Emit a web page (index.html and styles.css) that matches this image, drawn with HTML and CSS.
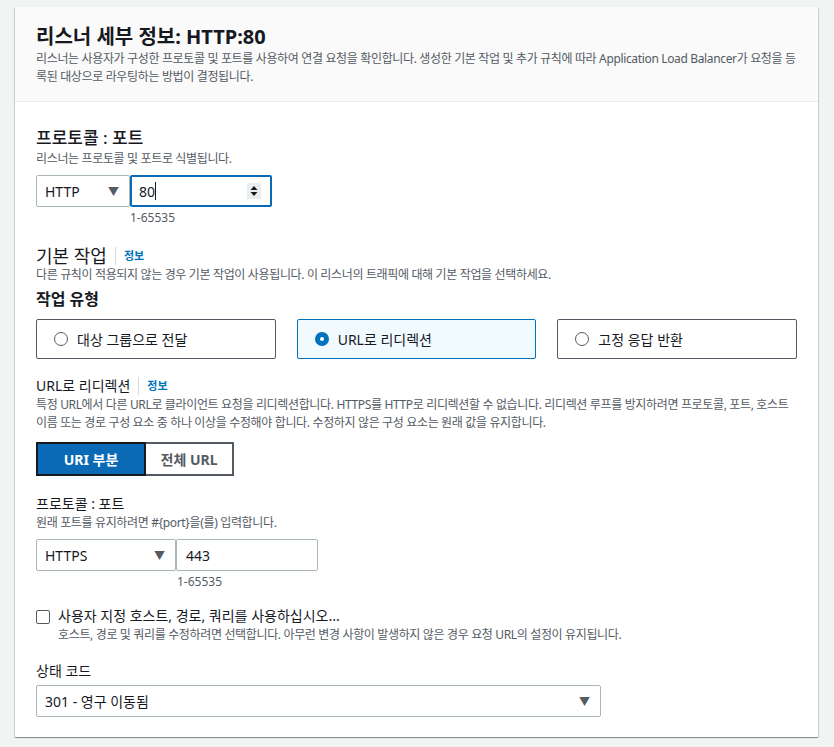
FILE: index.html
```html
<!DOCTYPE html>
<html lang="ko">
<head>
    <meta charset="UTF-8">
    <title>리스너 세부 정보</title>
    <link rel="stylesheet" href="styles.css">
</head>
<body>

<div class="card">
    <!-- Header -->
    <div class="card-header">
        <h2>리스너 세부 정보: HTTP:80</h2>
        <p class="desc">리스너는 사용자가 구성한 프로토콜 및 포트를 사용하여 연결 요청을 확인합니다. 생성한 기본 작업 및 추가 규칙에 따라 Application Load Balancer가 요청을 등록된 대상으로 라우팅하는 방법이 결정됩니다.</p>
    </div>

    <div class="card-body">
        <!-- Protocol : port -->
        <div class="field">
            <h3 class="label-lg">프로토콜 : 포트</h3>
            <p class="desc">리스너는 프로토콜 및 포트로 식별됩니다.</p>
            <div class="proto-row">
                <div class="select small">HTTP <span class="caret">▼</span></div>
                <div class="input focused">80<span class="cursor"></span>
                    <span class="spinner">
                        <svg width="8" height="12" viewBox="0 0 8 12"><path d="M4 1 L7.5 5 H0.5 Z M4 11 L7.5 7 H0.5 Z" fill="#16191f"/></svg>
                    </span>
                </div>
            </div>
            <div class="hint">1-65535</div>
        </div>

        <!-- Default action -->
        <div class="field default-action">
            <h3 class="label-xl">기본 작업 <span class="info">정보</span></h3>
            <p class="desc">다른 규칙이 적용되지 않는 경우 기본 작업이 사용됩니다. 이 리스너의 트래픽에 대해 기본 작업을 선택하세요.</p>
        </div>

        <div class="field">
            <h4 class="label-bold">작업 유형</h4>
            <div class="tiles">
                <div class="tile"><span class="radio"></span>대상 그룹으로 전달</div>
                <div class="tile selected"><span class="radio checked"></span>URL로 리디렉션</div>
                <div class="tile"><span class="radio"></span>고정 응답 반환</div>
            </div>
        </div>

        <div class="field redirect">
            <div class="label-md">URL로 리디렉션 <span class="info">정보</span></div>
            <p class="desc">특정 URL에서 다른 URL로 클라이언트 요청을 리디렉션합니다. HTTPS를 HTTP로 리디렉션할 수 없습니다. 리디렉션 루프를 방지하려면 프로토콜, 포트, 호스트 이름 또는 경로 구성 요소 중 하나 이상을 수정해야 합니다. 수정하지 않은 구성 요소는 원래 값을 유지합니다.</p>
            <div class="segmented">
                <div class="seg active">URI 부분</div>
                <div class="seg">전체 URL</div>
            </div>
        </div>

        <div class="field">
            <div class="label-md">프로토콜 : 포트</div>
            <p class="desc">원래 포트를 유지하려면 #{port}을(를) 입력합니다.</p>
            <div class="proto-row">
                <div class="select wide">HTTPS <span class="caret">▼</span></div>
                <div class="input">443</div>
            </div>
            <div class="hint wide-hint">1-65535</div>
        </div>

        <div class="field check-field">
            <span class="checkbox"></span>
            <div>
                <div class="check-label">사용자 지정 호스트, 경로, 쿼리를 사용하십시오...</div>
                <p class="desc">호스트, 경로 및 쿼리를 수정하려면 선택합니다. 아무런 변경 사항이 발생하지 않은 경우 요청 URL의 설정이 유지됩니다.</p>
            </div>
        </div>

        <div class="field last">
            <div class="label-md">상태 코드</div>
            <div class="select full">301 - 영구 이동됨 <span class="caret">▼</span></div>
        </div>
    </div>
</div>

</body>
</html>
```

FILE: styles.css
```css
body {
    font-family: "Noto Sans", "Noto Sans CJK KR", sans-serif;
    margin: 0;
    padding: 7px 16px 10px 15px;
    background-color: #f2f3f3;
    color: #16191f;
}

.card {
    background-color: #fff;
    border-radius: 1px;
    box-shadow: 0 1px 1px 0 rgba(0, 28, 36, 0.3), 1px 1px 1px 0 rgba(0, 28, 36, 0.15), -1px 1px 1px 0 rgba(0, 28, 36, 0.15);
}

.card-header {
    background-color: #fafafa;
    border-bottom: 1px solid #eaeded;
    padding: 18px 20px 15px 21px;
}

.card-header h2 {
    font-size: 20px;
    font-weight: 700;
    margin: 0 0 1px;
    line-height: 24px;
}

.desc {
    font-size: 12px;
    line-height: 18px;
    color: #545b64;
    margin: 0;
    letter-spacing: -0.35px;
}

.card-body {
    padding: 24px 21px 20px 21px;
}

.field {
    margin-bottom: 14px;
}

.field.last {
    margin-bottom: 0;
}

.label-lg {
    font-size: 17px;
    font-weight: 500;
    line-height: 24px;
    margin: 0 0 0;
}

.default-action {
    margin-top: 20px;
    margin-bottom: 4px;
}

.label-xl {
    font-size: 18px;
    font-weight: 400;
    line-height: 20px;
    margin: 0;
    display: flex;
    align-items: center;
}

.label-bold {
    font-size: 16px;
    font-weight: 700;
    line-height: 22px;
    margin: 0 0 9px;
}

.label-md {
    font-size: 14px;
    line-height: 20px;
    display: flex;
    align-items: center;
}

.redirect {
    margin-top: 17px;
    margin-bottom: 18px;
}

.info {
    font-size: 11px;
    font-weight: 700;
    color: #0073bb;
    border-left: 1px solid #d5dbdb;
    padding-left: 8px;
    margin-left: 8px;
    line-height: 18px;
}

.proto-row {
    display: flex;
    margin-top: 7px;
}

.select,
.input {
    height: 32px;
    box-sizing: border-box;
    border: 1px solid #aab7b8;
    border-radius: 2px;
    display: flex;
    align-items: center;
    padding: 0 10px 0 8px;
    font-size: 14px;
    background: #fff;
}

.select {
    justify-content: space-between;
}

.caret {
    font-size: 11px;
    color: #545b64;
}

.select.small {
    width: 94px;
}

.select.wide {
    width: 140px;
}

.select.full {
    width: 565px;
    margin-top: 4px;
}

.input {
    width: 142px;
    padding-left: 9px;
    position: relative;
}

.input.focused {
    border: 2px solid #0a6ab6;
    padding-left: 7px;
}

.cursor {
    display: inline-block;
    width: 1px;
    height: 18px;
    background: #16191f;
}

.spinner {
    position: absolute;
    right: 9px;
    top: 6px;
    width: 14px;
    height: 16px;
    background: #eaeded;
    display: flex;
    align-items: center;
    justify-content: center;
}

.hint {
    font-size: 12px;
    color: #545b64;
    margin: 3px 0 0 94px;
    line-height: 16px;
}

.hint.wide-hint {
    margin-left: 141px;
}

.tiles {
    display: flex;
    gap: 21px;
}

.tile {
    flex: 1;
    height: 40px;
    box-sizing: border-box;
    border: 1px solid #545b64;
    border-radius: 2px;
    display: flex;
    align-items: center;
    padding-left: 17px;
    font-size: 14px;
}

.tile.selected {
    background-color: #f1faff;
    border-color: #0073bb;
}

.radio {
    width: 12px;
    height: 12px;
    border: 1px solid #545b64;
    border-radius: 50%;
    margin-right: 9px;
    background: #fff;
}

.radio.checked {
    width: 4px;
    height: 4px;
    border: 5px solid #0073bb;
}

.segmented {
    display: flex;
    margin-top: 10px;
}

.seg {
    height: 34px;
    box-sizing: border-box;
    display: flex;
    align-items: center;
    justify-content: center;
    font-size: 14px;
    font-weight: 700;
    border: 2px solid #545b64;
    color: #545b64;
}

.seg.active {
    width: 110px;
    background-color: #0a6ab6;
    color: #fff;
    border-color: #16191f;
}

.seg:not(.active) {
    width: 88px;
    border-left: none;
}

.check-field {
    display: flex;
    gap: 8px;
    margin-top: 16px;
    margin-bottom: 17px;
}

.checkbox {
    width: 12px;
    height: 12px;
    border: 1px solid #545b64;
    border-radius: 2px;
    margin-top: 4px;
}

.check-label {
    font-size: 14px;
    line-height: 20px;
}
```
